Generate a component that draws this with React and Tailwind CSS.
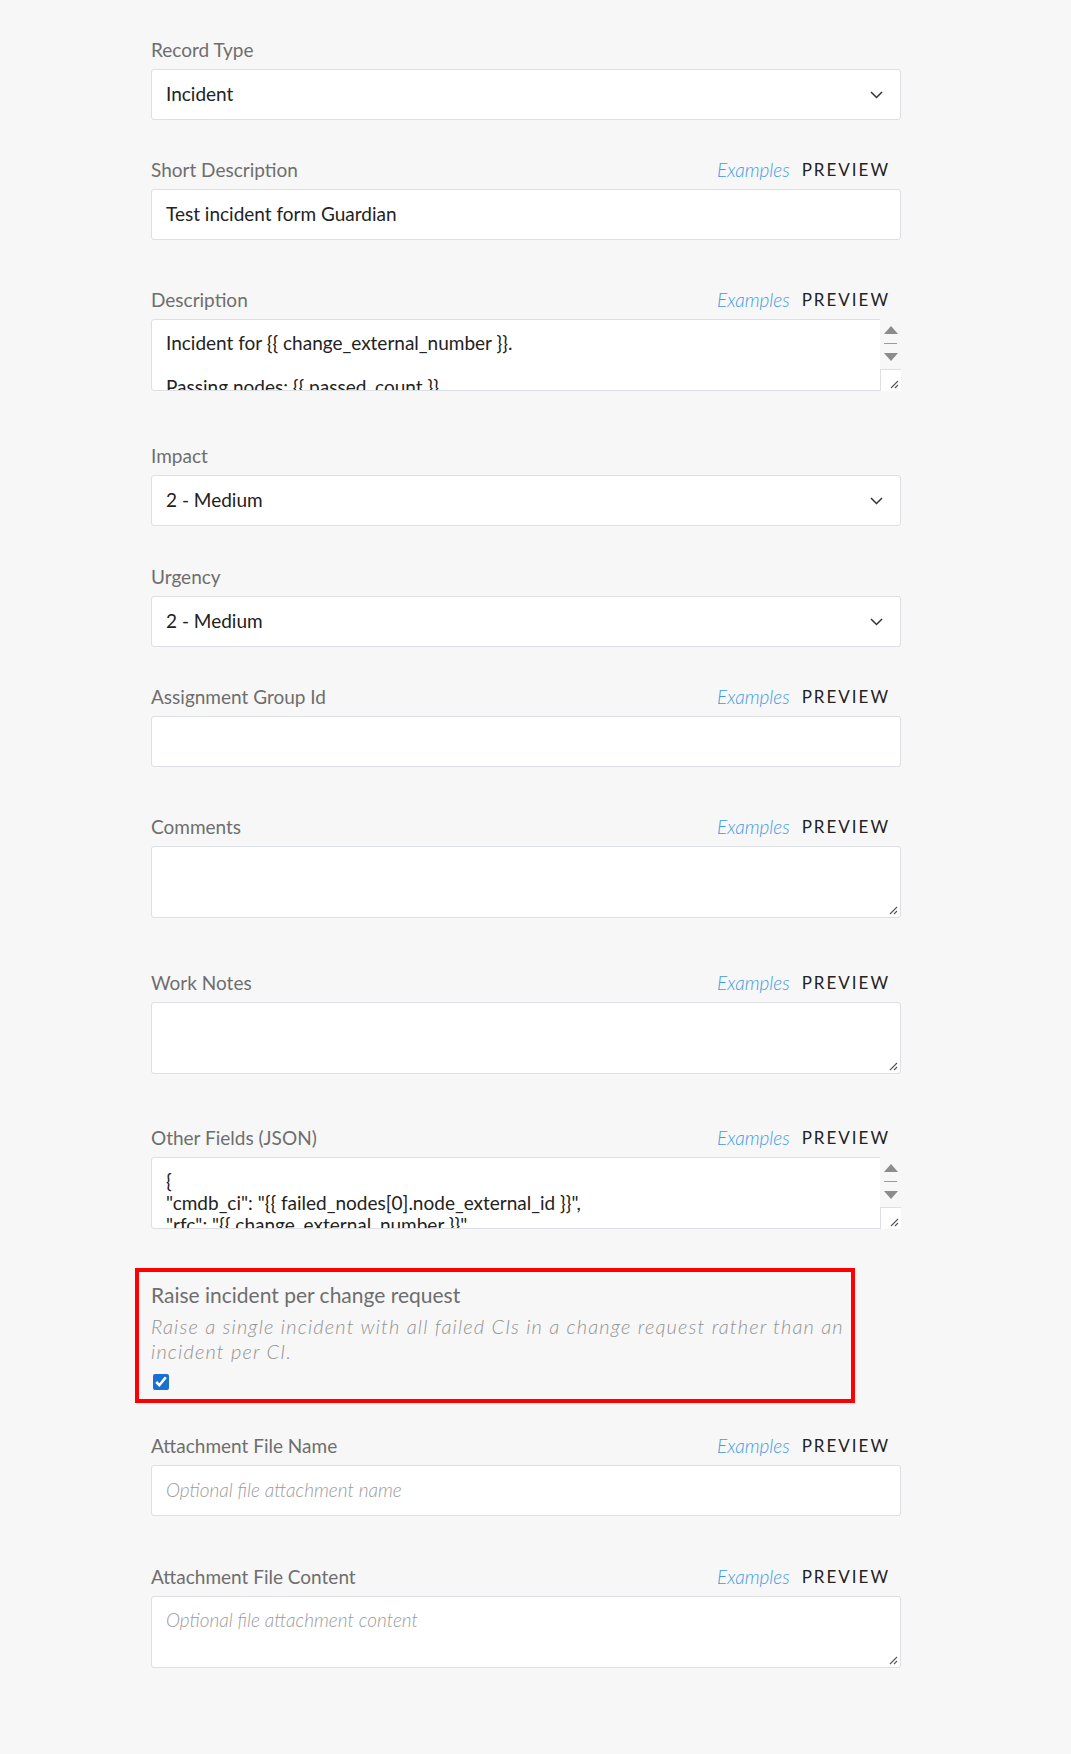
import React from 'react';

// Light stroked chevron used by the select boxes
function Chevron() {
  return (
    <svg width="13" height="8" viewBox="0 0 13 8" fill="none">
      <path d="M1 1 L6.5 6.5 L12 1" stroke="#333" strokeWidth="1.5" />
    </svg>
  );
}

// Little diagonal grip in the bottom right corner of a textarea
function Grip() {
  return (
    <svg width="10" height="10" viewBox="0 0 10 10" className="absolute bottom-[2px] right-[2px]">
      <path d="M9 2 L2 9 M9 6 L6 9" stroke="#555" strokeWidth="1.1" />
    </svg>
  );
}

function FieldLabel({ label, templated }) {
  return (
    <div className="flex h-[28px] items-center justify-between mb-[5px]">
      <span className="text-[19px] text-[#6e6e6e]">{label}</span>
      {templated && (
        <div className="flex items-center pr-[11px]">
          <span className="text-[19px] italic font-light text-[#3c9be6]">Examples</span>
          <span className="ml-[12px] text-[17px] font-normal tracking-[2px] text-[#222]">PREVIEW</span>
        </div>
      )}
    </div>
  );
}

function SelectField({ label, value, mb }) {
  return (
    <div className={mb}>
      <FieldLabel label={label} />
      <div className="flex h-[51px] items-center justify-between rounded-[3px] border border-[#dcdfe3] bg-white pl-[14px] pr-[17px] text-[19px] text-[#222]">
        <span>{value}</span>
        <Chevron />
      </div>
    </div>
  );
}

function TextField({ label, value, placeholder, mb }) {
  return (
    <div className={mb}>
      <FieldLabel label={label} templated />
      <div className="flex h-[51px] items-center rounded-[3px] border border-[#dcdfe3] bg-white pl-[14px] text-[19px]">
        {value ? (
          <span className="text-[#222]">{value}</span>
        ) : (
          <span className="italic font-light text-[#9b9b9b]">{placeholder}</span>
        )}
      </div>
    </div>
  );
}

function TextArea({ label, lines, placeholder, mb }) {
  const scrolls = lines && lines.length > 2;
  return (
    <div className={mb}>
      <FieldLabel label={label} templated />
      <div className="relative flex h-[72px] rounded-[3px] border border-[#dcdfe3] bg-white">
        <div className="flex-1 overflow-hidden pl-[14px] pt-[12px] text-[19px] leading-[22px] text-[#222]">
          {lines ? (
            lines.map((line, i) => (
              <div key={i} className="h-[22px] whitespace-pre">
                {line}
              </div>
            ))
          ) : placeholder ? (
            <span className="italic font-light text-[#9b9b9b]">{placeholder}</span>
          ) : null}
        </div>
        {scrolls ? (
          <div className="-my-px -mr-px flex w-[21px] flex-col items-center bg-[#f7f7f7]">
            <div className="mt-[7px] h-0 w-0 border-x-[7px] border-b-[8px] border-x-transparent border-b-[#8c8c8c]" />
            <div className="mt-[9px] h-px w-[13px] bg-[#9a9a9a]" />
            <div className="mt-[9px] h-0 w-0 border-x-[7px] border-t-[8px] border-x-transparent border-t-[#8c8c8c]" />
            <div className="relative mt-auto h-[22px] w-full border-l border-t border-[#dcdfe3] bg-white">
              <Grip />
            </div>
          </div>
        ) : (
          <Grip />
        )}
      </div>
    </div>
  );
}

export default function App() {
  return (
    <div className="min-h-[1754px] w-full bg-[#f7f7f7] font-['Lato','Noto_Sans',sans-serif]">
      <div className="ml-[151px] w-[750px] pt-[36px]">
        <SelectField label="Record Type" value="Incident" mb="mb-[36px]" />
        <TextField label="Short Description" value="Test incident form Guardian" mb="mb-[46px]" />
        <TextArea
          label="Description"
          lines={['Incident for {{ change_external_number }}.', '', 'Passing nodes: {{ passed_count }}', 'Failed nodes: {{ failed_count }}']}
          mb="mb-[51px]"
        />
        <SelectField label="Impact" value="2 - Medium" mb="mb-[37px]" />
        <SelectField label="Urgency" value="2 - Medium" mb="mb-[36px]" />
        <TextField label="Assignment Group Id" mb="mb-[46px]" />
        <TextArea label="Comments" mb="mb-[51px]" />
        <TextArea label="Work Notes" mb="mb-[50px]" />
        <TextArea
          label="Other Fields (JSON)"
          lines={['{', '"cmdb_ci": "{{ failed_nodes[0].node_external_id }}",', '"rfc": "{{ change_external_number }}"', '}']}
          mb="mb-[39px]"
        />

        <div className="-ml-[16px] w-[720px] border-4 border-[#ff0000] pb-[9px] pl-[12px] pr-[6px] pt-[9px]">
          <div className="h-[28px] text-[21px] leading-[28px] text-[#6e6e6e]">Raise incident per change request</div>
          <p className="mt-[5px] text-[20px] italic font-light leading-[25px] tracking-[1.15px] text-[#939393]">
            Raise a single incident with all failed CIs in a change request rather than an incident per CI.
          </p>
          <div className="mt-[10px] flex h-[16px] items-center">
            <input type="checkbox" checked readOnly className="m-0 ml-[2px] h-[16px] w-[16px] accent-[#1a6fd1]" />
          </div>
        </div>

        <div className="mt-[29px]">
          <TextField label="Attachment File Name" placeholder="Optional file attachment name" mb="mb-[47px]" />
          <TextArea label="Attachment File Content" placeholder="Optional file attachment content" />
        </div>
      </div>
    </div>
  );
}
